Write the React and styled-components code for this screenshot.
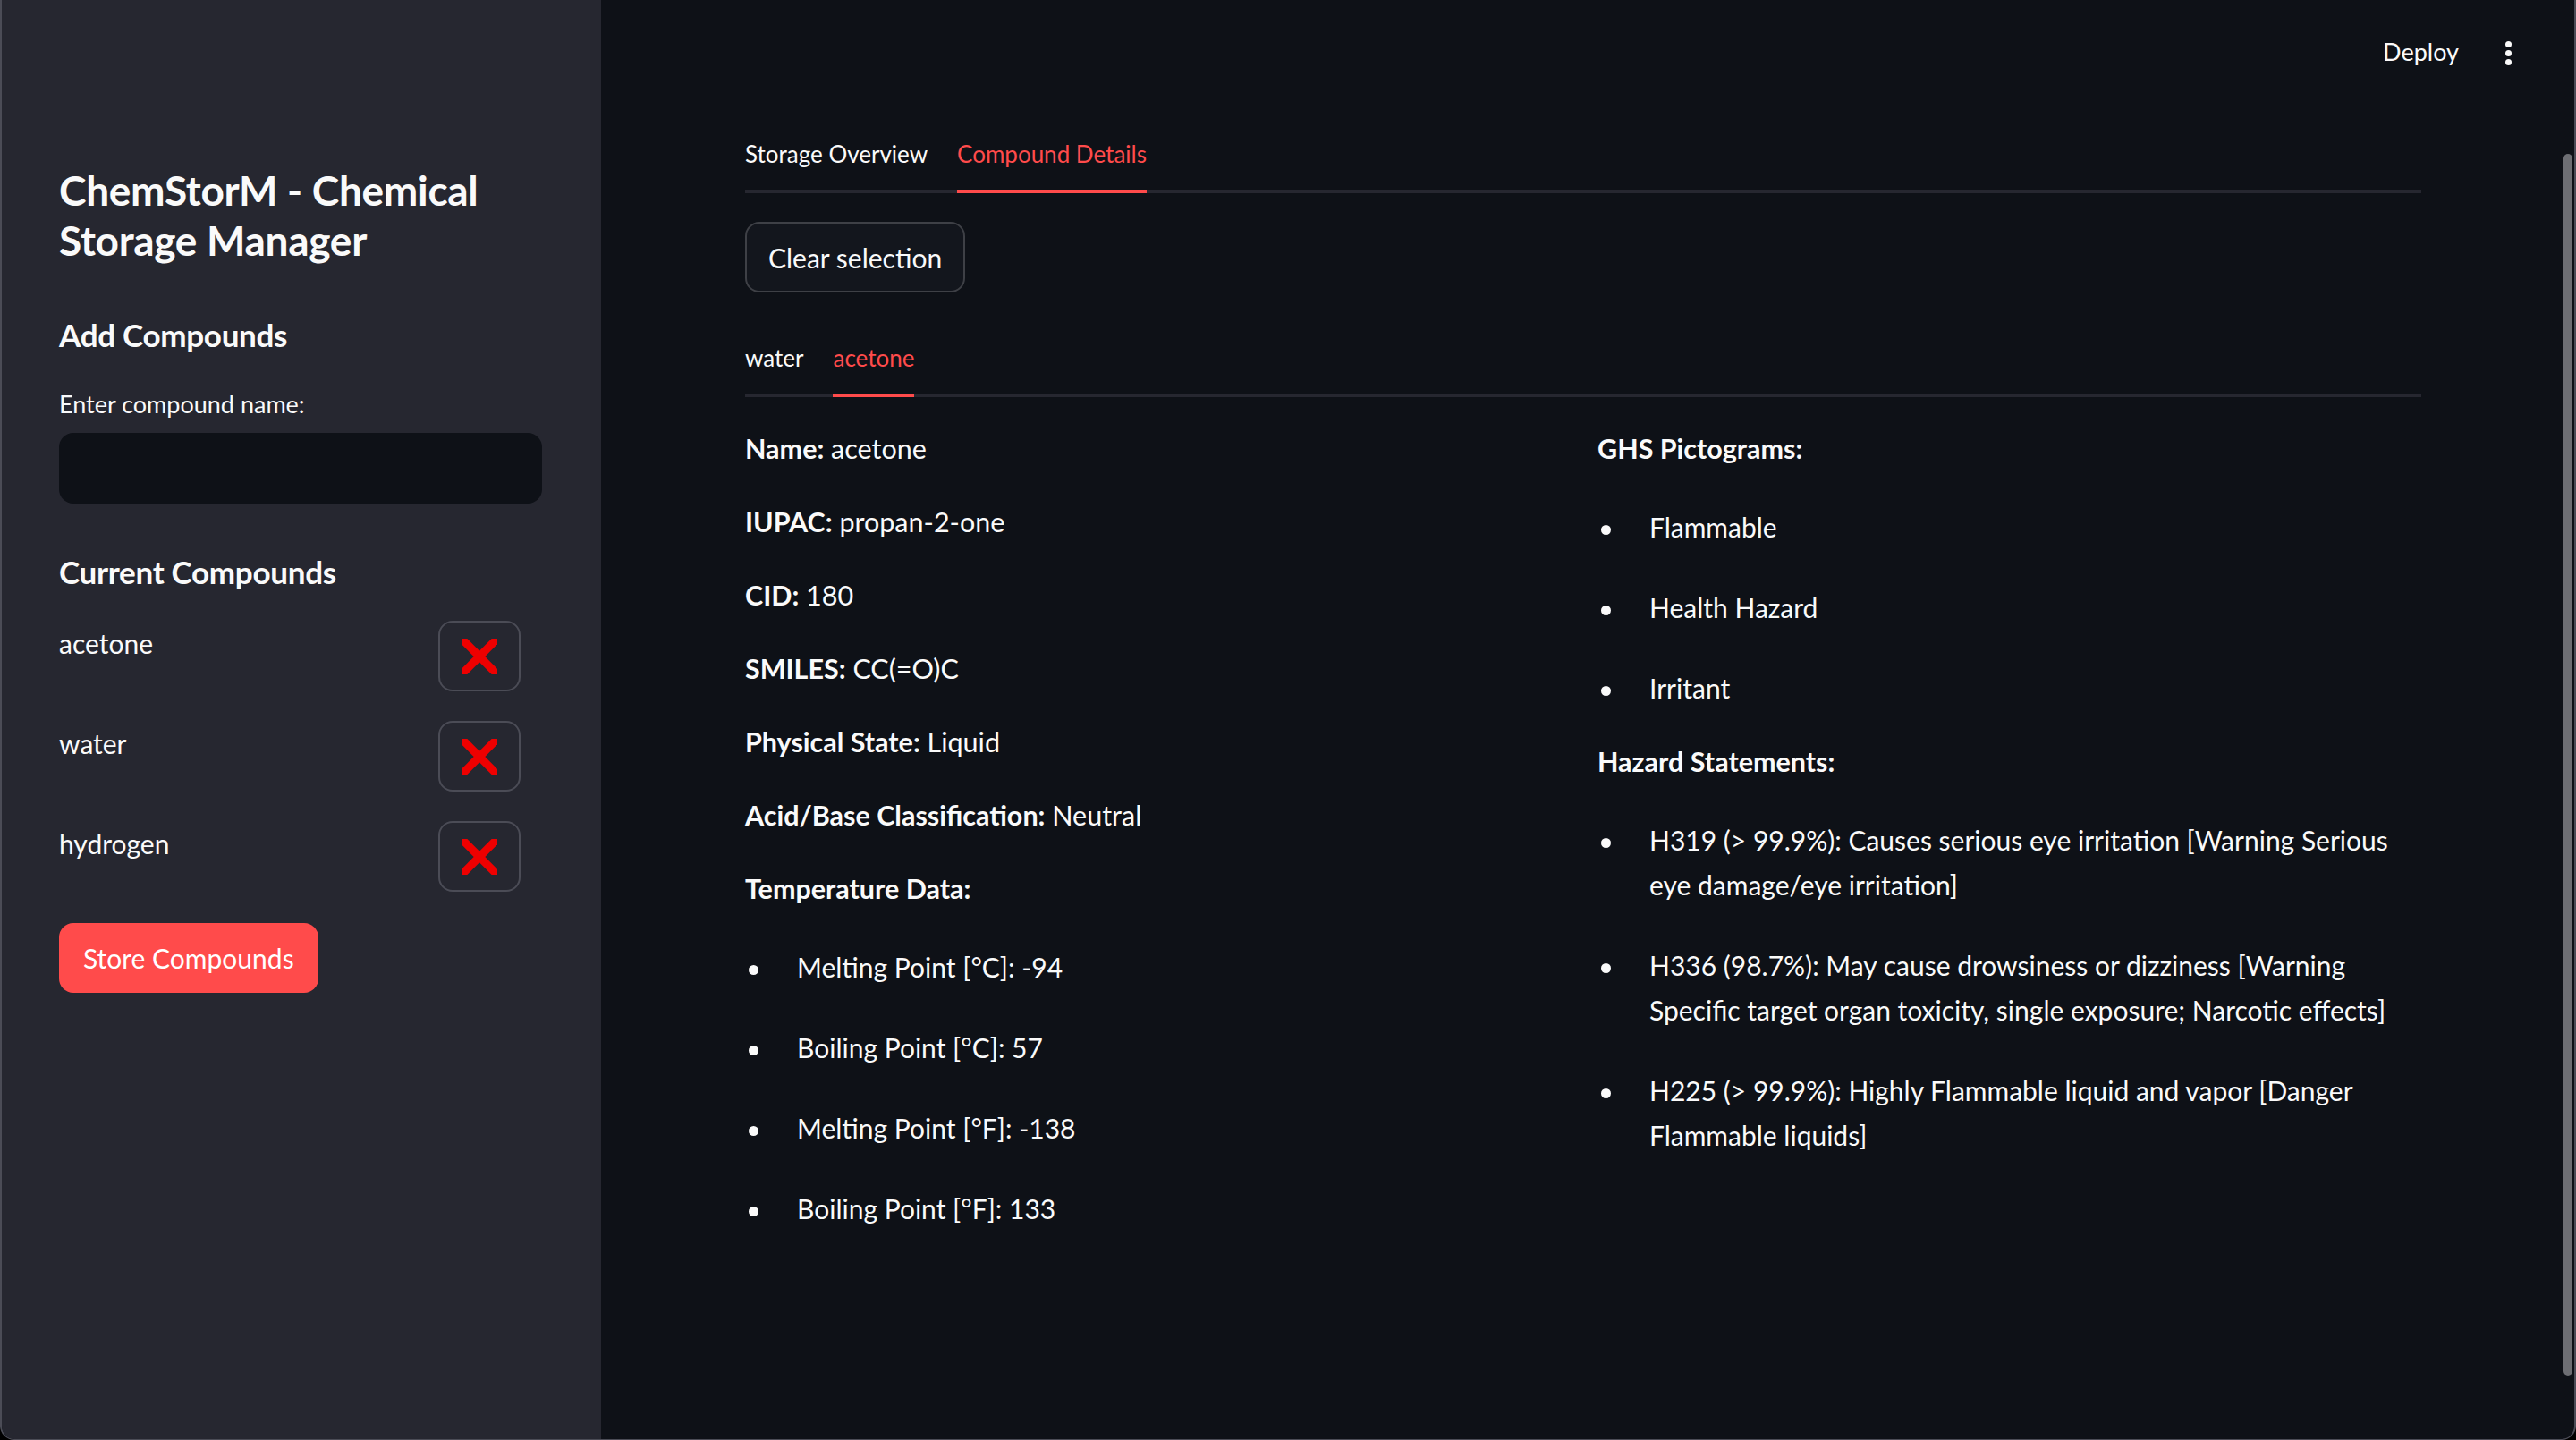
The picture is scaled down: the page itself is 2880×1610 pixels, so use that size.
import React from 'react'
import styled, { createGlobalStyle } from 'styled-components'

const GlobalStyle = createGlobalStyle`
  html, body {
    margin: 0;
    padding: 0;
    background: #000;
  }

  body {
    font-family: Lato, 'Open Sans', sans-serif;
    color: #fafafa;
  }

  * {
    box-sizing: border-box;
  }
`

const Window = styled.div`
  position: relative;
  display: flex;
  width: 2880px;
  height: 1610px;
  overflow: hidden;
  border-radius: 0 0 16px 16px;
  border-left: 2px solid #4b4c56;
  border-right: 2px solid #4b4c56;
  border-bottom: 1px solid #4b4c56;
  background: #0e1117;
`

const Sidebar = styled.aside`
  flex: 0 0 670px;
  padding: 185px 64px 0 64px;
  background: #262730;
`

const Title = styled.h1`
  margin: 0;
  font-size: 46px;
  line-height: 56px;
  font-weight: 700;
  letter-spacing: -0.3px;
`

const SectionTitle = styled.h3`
  margin: ${p => p.$top}px 0 0;
  font-size: 35px;
  line-height: 48px;
  font-weight: 700;
  letter-spacing: -0.3px;
`

const Label = styled.label`
  display: block;
  margin-top: 36px;
  font-size: 27px;
  line-height: 36px;
`

const TextInput = styled.input`
  display: block;
  width: 540px;
  height: 79px;
  margin-top: 14px;
  border: none;
  border-radius: 16px;
  background: #0e1117;
  outline: none;
`

const CompoundList = styled.div`
  display: flex;
  flex-direction: column;
  gap: 33px;
  margin-top: 31px;
`

const CompoundRow = styled.div`
  display: flex;
  justify-content: space-between;
  align-items: flex-start;
  padding-right: 26px;
`

const CompoundName = styled.span`
  font-size: 30px;
  line-height: 50px;
`

const RemoveButton = styled.button`
  display: flex;
  align-items: center;
  justify-content: center;
  width: 92px;
  height: 79px;
  border: 2px solid #4b4c56;
  border-radius: 16px;
  background: #262730;
  padding: 0;
`

const PrimaryButton = styled.button`
  margin-top: 35px;
  height: 78px;
  padding: 0 27px;
  border: none;
  border-radius: 16px;
  background: #ff4b4b;
  color: #fff;
  font-family: Lato, sans-serif;
  font-size: 30px;
`

const Main = styled.main`
  flex: 1;
  display: flex;
  flex-direction: column;
`

const Header = styled.header`
  display: flex;
  justify-content: flex-end;
  align-items: center;
  height: 122px;
  padding: 0 70px 0 0;
`

const DeployLink = styled.span`
  font-size: 27px;
  line-height: 40px;
  margin-right: 52px;
  margin-top: -7px;
`

const Kebab = styled.span`
  display: flex;
  flex-direction: column;
  gap: 3px;
  margin-top: -4px;

  i {
    width: 7px;
    height: 7px;
    border-radius: 50%;
    background: #fafafa;
  }
`

const Content = styled.div`
  padding: 10px 171px 0 161px;
`

const TabList = styled.div`
  display: flex;
  gap: 33px;
  margin-top: ${p => p.$top || 0}px;
  border-bottom: 4px solid #262730;
`

const Tab = styled.div`
  height: 80px;
  line-height: 80px;
  margin-bottom: -4px;
  font-size: 26px;
  color: ${p => (p.$active ? '#ff4b4b' : '#fafafa')};
  border-bottom: 4px solid ${p => (p.$active ? '#ff4b4b' : 'transparent')};
  box-sizing: content-box;
`

const SecondaryButton = styled.button`
  display: block;
  margin-top: 32px;
  height: 79px;
  padding: 0 24px;
  border: 2px solid #3e4046;
  border-radius: 16px;
  background: #13161d;
  color: #fafafa;
  font-family: Lato, sans-serif;
  font-size: 30px;
`

const Columns = styled.div`
  display: grid;
  grid-template-columns: 1fr 1fr;
  gap: 32px;
  margin-top: 32px;
`

const Column = styled.div`
  display: flex;
  flex-direction: column;
  gap: 32px;
`

const Para = styled.p`
  margin: 0;
  font-size: 30.5px;
  line-height: 50px;

  strong {
    font-weight: 700;
  }
`

const BulletList = styled.ul`
  display: flex;
  flex-direction: column;
  gap: 40px;
  margin: 6px 0 0;
  padding: 0;
  list-style: none;
`

const Bullet = styled.li`
  display: grid;
  grid-template-columns: 58px 1fr;
  font-size: 30px;
  line-height: 50px;

  &::before {
    content: '';
    width: 11px;
    height: 11px;
    margin: 23px 0 0 4px;
    border-radius: 50%;
    background: #fafafa;
  }
`

const ScrollThumb = styled.div`
  position: absolute;
  top: 172px;
  right: 2px;
  width: 10px;
  height: 1366px;
  border-radius: 5px;
  background: #6d6e73;
`

const CrossIcon = () => (
  <svg width="40" height="40" viewBox="0 0 40 40">
    <defs>
      <clipPath id="crossClip">
        <rect x="0" y="0" width="40" height="40" />
      </clipPath>
    </defs>
    <g clipPath="url(#crossClip)" stroke="#ee0000" strokeWidth="9">
      <line x1="-2" y1="-2" x2="42" y2="42" />
      <line x1="42" y1="-2" x2="-2" y2="42" />
    </g>
  </svg>
)

const compounds = ['acetone', 'water', 'hydrogen']

const details = [
  ['Name:', 'acetone'],
  ['IUPAC:', 'propan-2-one'],
  ['CID:', '180'],
  ['SMILES:', 'CC(=O)C'],
  ['Physical State:', 'Liquid'],
  ['Acid/Base Classification:', 'Neutral'],
]

const temperatures = [
  'Melting Point [°C]: -94',
  'Boiling Point [°C]: 57',
  'Melting Point [°F]: -138',
  'Boiling Point [°F]: 133',
]

const pictograms = ['Flammable', 'Health Hazard', 'Irritant']

const hazards = [
  'H319 (> 99.9%): Causes serious eye irritation [Warning Serious eye damage/eye irritation]',
  'H336 (98.7%): May cause drowsiness or dizziness [Warning Specific target organ toxicity, single exposure; Narcotic effects]',
  'H225 (> 99.9%): Highly Flammable liquid and vapor [Danger Flammable liquids]',
]

const App = () => (
  <Window>
    <GlobalStyle />
    <Sidebar>
      <Title>ChemStorM - Chemical Storage Manager</Title>
      <SectionTitle $top={53}>Add Compounds</SectionTitle>
      <Label>Enter compound name:</Label>
      <TextInput />
      <SectionTitle $top={52}>Current Compounds</SectionTitle>
      <CompoundList>
        {compounds.map(name => (
          <CompoundRow key={name}>
            <CompoundName>{name}</CompoundName>
            <RemoveButton>
              <CrossIcon />
            </RemoveButton>
          </CompoundRow>
        ))}
      </CompoundList>
      <PrimaryButton>Store Compounds</PrimaryButton>
    </Sidebar>

    <Main>
      <Header>
        <DeployLink>Deploy</DeployLink>
        <Kebab>
          <i />
          <i />
          <i />
        </Kebab>
      </Header>
      <Content>
        <TabList>
          <Tab>Storage Overview</Tab>
          <Tab $active>Compound Details</Tab>
        </TabList>
        <SecondaryButton>Clear selection</SecondaryButton>
        <TabList $top={33}>
          <Tab>water</Tab>
          <Tab $active>acetone</Tab>
        </TabList>
        <Columns>
          <Column>
            {details.map(([k, v]) => (
              <Para key={k}>
                <strong>{k}</strong> {v}
              </Para>
            ))}
            <Para>
              <strong>Temperature Data:</strong>
            </Para>
            <BulletList>
              {temperatures.map(t => (
                <Bullet key={t}>{t}</Bullet>
              ))}
            </BulletList>
          </Column>
          <Column>
            <Para>
              <strong>GHS Pictograms:</strong>
            </Para>
            <BulletList>
              {pictograms.map(p => (
                <Bullet key={p}>{p}</Bullet>
              ))}
            </BulletList>
            <Para>
              <strong>Hazard Statements:</strong>
            </Para>
            <BulletList>
              {hazards.map(h => (
                <Bullet key={h}>{h}</Bullet>
              ))}
            </BulletList>
          </Column>
        </Columns>
      </Content>
    </Main>
    <ScrollThumb />
  </Window>
)

export default App
